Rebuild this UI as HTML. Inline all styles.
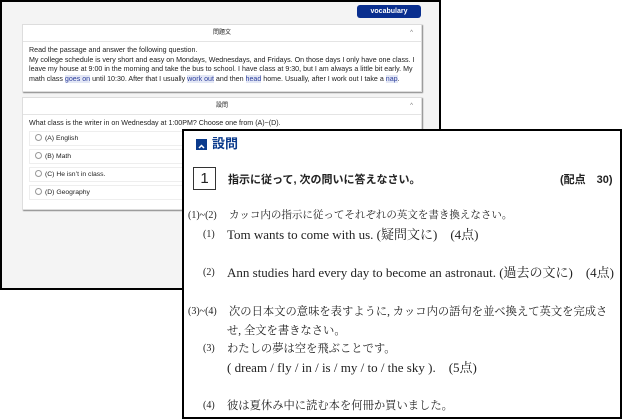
<!DOCTYPE html>
<html><head><meta charset="utf-8"><style>
*{margin:0;padding:0;box-sizing:border-box}
body{width:623px;height:420px;background:#fff;position:relative;overflow:hidden;font-family:"Liberation Sans","Noto Sans CJK JP",sans-serif}
#back{position:absolute;left:0;top:0;width:441px;height:290px;border:2px solid #000;background:#f4f4f4}
.btn{position:absolute;left:355px;top:3px;width:64px;height:13px;background:#0a2f8f;border-radius:3px;color:#fff;font-size:7px;font-weight:bold;text-align:center;line-height:13px}
.card{position:absolute;left:20px;width:400px;background:#fff;border:1px solid #ddd;box-shadow:1px 1px 1px #888;font-size:7.1px;color:#222}
.hd{height:17px;border-bottom:1px solid #e4e4e4;text-align:center;line-height:17px;font-size:6px;position:relative}
.hd span{position:absolute;right:8px;top:0;color:#777}
.p{padding:4px 6px;line-height:9.5px}
.hl{background:#e4e8f6;color:#2a3c9a}
.opt{margin:0 6px 3px;height:15px;border:1px solid #eee;line-height:14px;padding-left:5px;font-size:6.8px}
.opt i{display:inline-block;width:7px;height:7px;border:1px solid #999;border-radius:50%;vertical-align:-1px;margin-right:3px}
#front{position:absolute;left:182px;top:129px;width:440px;height:290px;border:2px solid #000;background:#fff;font-family:"Liberation Serif","Noto Serif CJK SC",serif;color:#222}
.t{position:absolute;white-space:nowrap;font-size:13px;line-height:16px}
.j{font-size:11.3px}
.m{position:absolute;font-size:10px;line-height:16px;white-space:nowrap}
.ic{position:absolute;left:12px;top:8px;width:11px;height:11px;background:#0a3a8c}
.s{font-family:'Liberation Sans','Noto Sans CJK JP',sans-serif;font-weight:bold;font-size:11px}
</style></head><body>
<div id="back">
<div class="btn">vocabulary</div>
<div class="card" style="top:22px;height:68px">
<div class="hd">問題文<span>^</span></div>
<div class="p">Read the passage and answer the following question.<br>My college schedule is very short and easy on Mondays, Wednesdays, and Fridays. On those days I only have one class. I leave my house at 9:00 in the morning and take the bus to school. I have class at 9:30, but I am always a little bit early. My math class <span class="hl">goes on</span> until 10:30. After that I usually <span class="hl">work out</span> and then <span class="hl">head</span> home. Usually, after I work out I take a <span class="hl">nap</span>.</div>
</div>
<div class="card" style="top:95px;height:113px">
<div class="hd">設問<span>^</span></div>
<div class="p" style="padding-bottom:2px">What class is the writer in on Wednesday at 1:00PM? Choose one from (A)~(D).</div>
<div class="opt"><i></i>(A) English</div>
<div class="opt"><i></i>(B) Math</div>
<div class="opt"><i></i>(C) He isn’t in class.</div>
<div class="opt"><i></i>(D) Geography</div>
</div>
</div>
<div id="front">
<div class="ic"><svg width="11" height="11"><path d="M3 7 L5.5 4.5 L8 7" stroke="#fff" stroke-width="1.5" fill="none"/></svg></div>
<div class="t" style="left:28px;top:5px;font-family:'Liberation Sans','Noto Sans CJK JP',sans-serif;font-weight:bold;color:#0a3a8c;font-size:13px">設問</div>
<div class="t" style="left:9px;top:36px;width:23px;height:23px;border:1px solid #333;text-align:center;font-family:'Liberation Sans',sans-serif;font-size:15px;line-height:21px">1</div>
<div class="t s" style="left:44px;top:41px">指示に従って, 次の問いに答えなさい。</div>
<div class="t s" style="left:376px;top:41px">(配点　30)</div>
<div class="m" style="left:4px;top:77px">(1)~(2)</div>
<div class="t j" style="left:45px;top:77px;font-size:10.5px">カッコ内の指示に従ってそれぞれの英文を書き換えなさい。</div>
<div class="m" style="left:19px;top:96px">(1)</div>
<div class="t" style="left:43px;top:96px">Tom wants to come with us. (疑問文に)　(4点)</div>
<div class="m" style="left:19px;top:134px">(2)</div>
<div class="t" style="left:43px;top:134px">Ann studies hard every day to become an astronaut. (過去の文に)　(4点)</div>
<div class="m" style="left:4px;top:173px">(3)~(4)</div>
<div class="t j" style="left:45px;top:173px">次の日本文の意味を表すように, カッコ内の語句を並べ換えて英文を完成さ</div>
<div class="t j" style="left:43px;top:192px">せ, 全文を書きなさい。</div>
<div class="m" style="left:19px;top:210px">(3)</div>
<div class="t j" style="left:43px;top:210px">わたしの夢は空を飛ぶことです。</div>
<div class="t" style="left:43px;top:229px">( dream / fly / in / is / my / to / the sky ).　(5点)</div>
<div class="m" style="left:19px;top:267px">(4)</div>
<div class="t j" style="left:43px;top:267px">彼は夏休み中に読む本を何冊か買いました。</div>
</div>
</body></html>
